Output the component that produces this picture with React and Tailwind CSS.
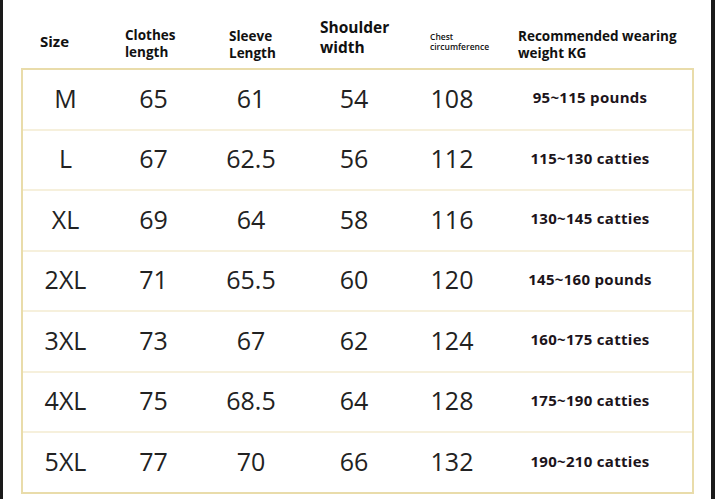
import React from 'react';

const rows = [
    ['M', '65', '61', '54', '108', '95~115 pounds'],
    ['L', '67', '62.5', '56', '112', '115~130 catties'],
    ['XL', '69', '64', '58', '116', '130~145 catties'],
    ['2XL', '71', '65.5', '60', '120', '145~160 pounds'],
    ['3XL', '73', '67', '62', '124', '160~175 catties'],
    ['4XL', '75', '68.5', '64', '128', '175~190 catties'],
    ['5XL', '77', '70', '66', '132', '190~210 catties'],
];

// same column template for header and body
const cols = 'grid grid-cols-[85px_91px_104px_102px_94px_182px]';

const SizeChart = () => {
    return (
        <div
            className="w-[715px] h-[499px] bg-white border-l-[3px] border-r-[4px] border-[#1a1a1a] overflow-hidden"
            style={{ fontFamily: '"Open Sans", "Noto Sans", sans-serif' }}
        >
            <div className="ml-[18px] w-[673px]">
                {/* header */}
                <div className={`${cols} h-[68px] px-[2px] font-bold text-[#111]`}>
                    <div className="pl-[17px] pt-[32px] text-[15px] leading-[18px]">Size</div>
                    <div className="pl-[17px] pt-[27px] text-[13.5px] leading-[17px]">
                        Clothes<br />length
                    </div>
                    <div className="pl-[30px] pt-[28px] text-[13.5px] leading-[17px]">
                        Sleeve<br />Length
                    </div>
                    <div className="pl-[17px] pt-[17px] text-[15.5px] leading-[20px]">
                        Shoulder<br />width
                    </div>
                    <div className="pl-[25px] pt-[32px] text-[8.5px] leading-[10px] font-semibold">
                        Chest<br />circumference
                    </div>
                    <div className="pl-[19px] pt-[28px] text-[13.5px] leading-[17px] whitespace-nowrap">
                        Recommended wearing<br />weight KG
                    </div>
                </div>

                {/* table */}
                <div className="border-2 border-[#e9dcaa] h-[426px] flex flex-col">
                    {rows.map((r, i) => (
                        <div
                            key={r[0]}
                            className={`${cols} flex-1 items-center ${i > 0 ? 'border-t-2 border-[#f6f0dc]' : ''}`}
                        >
                            {r.slice(0, 5).map((c, j) => (
                                <div key={j} className="text-center text-[25px] text-[#222] -mt-[2px]">{c}</div>
                            ))}
                            <div className="text-center text-[15px] tracking-[0.3px] font-bold text-[#1c141a] -mt-[4px]">{r[5]}</div>
                        </div>
                    ))}
                </div>
            </div>
        </div>
    );
};

export default SizeChart;
